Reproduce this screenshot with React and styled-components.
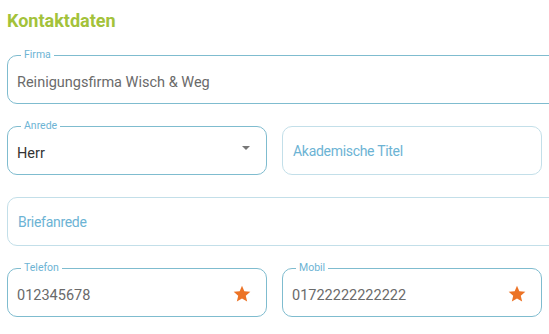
import React from "react";
import styled, { createGlobalStyle } from "styled-components";

const GlobalStyle = createGlobalStyle`
  body {
    margin: 0;
    background: #fff;
    font-family: Roboto, "Liberation Sans", sans-serif;
    overflow: hidden;
  }
`;

const Page = styled.div`
  padding: 0 0 0 7px;
  width: 580px;
`;

const Title = styled.h2`
  margin: 0;
  padding-top: 10px;
  height: 55px;
  box-sizing: border-box;
  font-size: 18px;
  font-weight: 700;
  color: #a3c23a;
  line-height: 22px;
`;

const Form = styled.div`
  display: grid;
  grid-template-columns: 260px 260px;
  column-gap: 15px;
  row-gap: 22px;
`;

const Field = styled.div`
  position: relative;
  grid-column: ${(p) => (p.$wide ? "1 / -1" : "auto")};
  width: ${(p) => (p.$wide ? "570px" : "auto")};
  height: 49px;
  box-sizing: border-box;
  border: 1px solid ${(p) => (p.$filled ? "#7fbccf" : "#c3dfe9")};
  border-radius: 10px;
  display: flex;
  align-items: center;
  padding: 0 16px 0 9px;
`;

const Label = styled.span`
  position: absolute;
  top: -7px;
  left: 13px;
  padding: 0 3px;
  background: #fff;
  font-size: 10.5px;
  line-height: 12px;
  color: #6db4d4;
`;

const Value = styled.span`
  flex: 1;
  font-size: ${(p) => (p.$placeholder ? "14px" : "14.5px")};
  letter-spacing: ${(p) => (p.$placeholder ? "-0.3px" : "0")};
  color: ${(p) => (p.$placeholder ? "#6cb3d4" : p.$dark ? "#333" : "#6a6a6a")};
  padding-top: ${(p) => (p.$placeholder ? "0" : "5px")};
  padding-left: ${(p) => (p.$placeholder ? "1px" : "0")};
`;

const Caret = styled.span`
  width: 0;
  height: 0;
  border-left: 4px solid transparent;
  border-right: 4px solid transparent;
  border-top: 4px solid #777;
  margin-top: -6px;
`;

const StarIcon = styled.svg`
  width: 20px;
  height: 20px;
  margin-right: -2px;
  margin-top: 3px;
  fill: #ec7326;
`;

function Star() {
  return (
    <StarIcon viewBox="0 0 24 24">
      <path d="M12 17.27L18.18 21l-1.64-7.03L22 9.24l-7.19-.61L12 2 9.19 8.63 2 9.24l5.46 4.73L5.82 21z" />
    </StarIcon>
  );
}

export default function App() {
  return (
    <>
      <GlobalStyle />
      <Page>
        <Title>Kontaktdaten</Title>
        <Form>
          <Field $wide $filled>
            <Label>Firma</Label>
            <Value>Reinigungsfirma Wisch &amp; Weg</Value>
          </Field>

          <Field $filled>
            <Label>Anrede</Label>
            <Value $dark>Herr</Value>
            <Caret />
          </Field>
          <Field>
            <Value $placeholder>Akademische Titel</Value>
          </Field>

          <Field $wide>
            <Value $placeholder>Briefanrede</Value>
          </Field>

          <Field $filled>
            <Label>Telefon</Label>
            <Value>012345678</Value>
            <Star />
          </Field>
          <Field $filled>
            <Label>Mobil</Label>
            <Value>01722222222222</Value>
            <Star />
          </Field>
        </Form>
      </Page>
    </>
  );
}
